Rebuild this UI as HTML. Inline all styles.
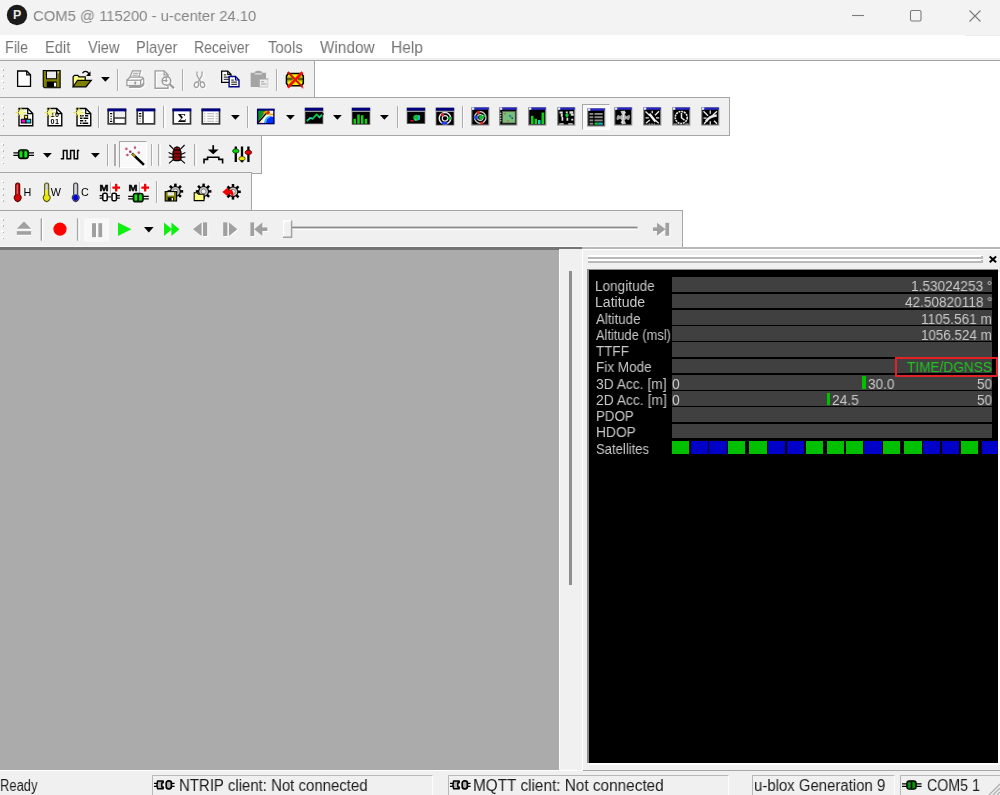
<!DOCTYPE html>
<html><head><meta charset="utf-8"><title>u-center</title>
<style>
html,body{margin:0;padding:0;}
body{width:1000px;height:795px;overflow:hidden;position:relative;background:#fff;font-family:"Liberation Sans",sans-serif;}
.r{position:absolute;display:block;}
.t{position:absolute;white-space:pre;transform-origin:0 50%;display:block;will-change:transform;}
svg{overflow:visible;}
.ic{filter:blur(0.35px);}
</style></head><body>
<div class="r" style="left:0px;top:0px;width:1000px;height:34.6px;background:#f3f3f3;"></div>
<svg class="r" style="left:6px;top:4px" width="22" height="22" viewBox="0 0 22 22"><circle cx="11" cy="11" r="10.2" fill="#1b1b1b"/><text x="11.2" y="15.4" text-anchor="middle" font-family="Liberation Sans, sans-serif" font-weight="bold" font-size="12.4" fill="#e8e8e8">P</text></svg>
<span class="t" style="left:33.26px;top:8.38px;font-size:15.5px;line-height:15.5px;color:#858585;transform:scaleX(0.9564);">COM5 @ 115200 - u-center 24.10</span>
<svg class="r" style="left:840px;top:0" width="160" height="35" viewBox="0 0 160 35" fill="none" stroke="#7c7c7c" stroke-width="1.1"><path d="M12 15.5H24"/><rect x="70.5" y="10.5" width="10.5" height="10.5" rx="1.5"/><path d="M129.5 10.5L140.5 21.5M140.5 10.5L129.5 21.5"/></svg>
<div class="r" style="left:0px;top:34.6px;width:1000px;height:25px;background:#ffffff;"></div>
<div class="r" style="left:965px;top:34.6px;width:35px;height:1.2px;background:#ececec;"></div>
<span class="t" style="left:5.45px;top:38.79px;font-size:16.2px;line-height:16.2px;color:#747474;transform:scaleX(0.8866);">File</span>
<span class="t" style="left:44.83px;top:38.79px;font-size:16.2px;line-height:16.2px;color:#747474;transform:scaleX(0.9061);">Edit</span>
<span class="t" style="left:87.93px;top:38.79px;font-size:16.2px;line-height:16.2px;color:#747474;transform:scaleX(0.9065);">View</span>
<span class="t" style="left:135.83px;top:38.79px;font-size:16.2px;line-height:16.2px;color:#747474;transform:scaleX(0.9011);">Player</span>
<span class="t" style="left:193.88px;top:38.79px;font-size:16.2px;line-height:16.2px;color:#747474;transform:scaleX(0.8647);">Receiver</span>
<span class="t" style="left:267.70px;top:38.79px;font-size:16.2px;line-height:16.2px;color:#747474;transform:scaleX(0.9205);">Tools</span>
<span class="t" style="left:319.92px;top:38.79px;font-size:16.2px;line-height:16.2px;color:#747474;transform:scaleX(0.9463);">Window</span>
<span class="t" style="left:390.76px;top:38.79px;font-size:16.2px;line-height:16.2px;color:#747474;transform:scaleX(0.9570);">Help</span>
<div class="r" style="left:0px;top:57.5px;width:1000px;height:2.4px;background:#f0f0f0;"></div>
<div class="r" style="left:0px;top:59.8px;width:1000px;height:190px;background:#ffffff;"></div>
<div class="r" style="left:0px;top:59.7px;width:1000px;height:1.4px;background:#a4a4a4;"></div>
<div class="r" style="left:0px;top:59.8px;width:314.6px;height:38.9px;background:#f0f0f0;border-top:1.4px solid #a6a6a6;border-right:1.4px solid #a6a6a6;border-bottom:1.4px solid #a6a6a6;box-sizing:border-box;"></div>
<div class="r" style="left:1.2px;top:67.89999999999999px;width:1.7px;height:1.7px;background:#ffffff;"></div>
<div class="r" style="left:2.6px;top:69.1px;width:1.8px;height:1.8px;background:#b6b6b6;"></div>
<div class="r" style="left:1.2px;top:74.1px;width:1.7px;height:1.7px;background:#ffffff;"></div>
<div class="r" style="left:2.6px;top:75.3px;width:1.8px;height:1.8px;background:#b6b6b6;"></div>
<div class="r" style="left:1.2px;top:80.3px;width:1.7px;height:1.7px;background:#ffffff;"></div>
<div class="r" style="left:2.6px;top:81.5px;width:1.8px;height:1.8px;background:#b6b6b6;"></div>
<div class="r" style="left:1.2px;top:86.5px;width:1.7px;height:1.7px;background:#ffffff;"></div>
<div class="r" style="left:2.6px;top:87.69999999999999px;width:1.8px;height:1.8px;background:#b6b6b6;"></div>
<div class="r" style="left:0px;top:97.3px;width:730.4px;height:38.9px;background:#f0f0f0;border-top:1.4px solid #a6a6a6;border-right:1.4px solid #a6a6a6;border-bottom:1.4px solid #a6a6a6;box-sizing:border-box;"></div>
<div class="r" style="left:1.2px;top:105.39999999999999px;width:1.7px;height:1.7px;background:#ffffff;"></div>
<div class="r" style="left:2.6px;top:106.6px;width:1.8px;height:1.8px;background:#b6b6b6;"></div>
<div class="r" style="left:1.2px;top:111.6px;width:1.7px;height:1.7px;background:#ffffff;"></div>
<div class="r" style="left:2.6px;top:112.8px;width:1.8px;height:1.8px;background:#b6b6b6;"></div>
<div class="r" style="left:1.2px;top:117.8px;width:1.7px;height:1.7px;background:#ffffff;"></div>
<div class="r" style="left:2.6px;top:119.0px;width:1.8px;height:1.8px;background:#b6b6b6;"></div>
<div class="r" style="left:1.2px;top:124.0px;width:1.7px;height:1.7px;background:#ffffff;"></div>
<div class="r" style="left:2.6px;top:125.19999999999999px;width:1.8px;height:1.8px;background:#b6b6b6;"></div>
<div class="r" style="left:0px;top:134.8px;width:262.3px;height:38.9px;background:#f0f0f0;border-top:1.4px solid #a6a6a6;border-right:1.4px solid #a6a6a6;border-bottom:1.4px solid #a6a6a6;box-sizing:border-box;"></div>
<div class="r" style="left:1.2px;top:142.9px;width:1.7px;height:1.7px;background:#ffffff;"></div>
<div class="r" style="left:2.6px;top:144.10000000000002px;width:1.8px;height:1.8px;background:#b6b6b6;"></div>
<div class="r" style="left:1.2px;top:149.1px;width:1.7px;height:1.7px;background:#ffffff;"></div>
<div class="r" style="left:2.6px;top:150.3px;width:1.8px;height:1.8px;background:#b6b6b6;"></div>
<div class="r" style="left:1.2px;top:155.3px;width:1.7px;height:1.7px;background:#ffffff;"></div>
<div class="r" style="left:2.6px;top:156.50000000000003px;width:1.8px;height:1.8px;background:#b6b6b6;"></div>
<div class="r" style="left:1.2px;top:161.5px;width:1.7px;height:1.7px;background:#ffffff;"></div>
<div class="r" style="left:2.6px;top:162.70000000000002px;width:1.8px;height:1.8px;background:#b6b6b6;"></div>
<div class="r" style="left:0px;top:172.3px;width:252.3px;height:38.9px;background:#f0f0f0;border-top:1.4px solid #a6a6a6;border-right:1.4px solid #a6a6a6;border-bottom:1.4px solid #a6a6a6;box-sizing:border-box;"></div>
<div class="r" style="left:1.2px;top:180.4px;width:1.7px;height:1.7px;background:#ffffff;"></div>
<div class="r" style="left:2.6px;top:181.60000000000002px;width:1.8px;height:1.8px;background:#b6b6b6;"></div>
<div class="r" style="left:1.2px;top:186.6px;width:1.7px;height:1.7px;background:#ffffff;"></div>
<div class="r" style="left:2.6px;top:187.8px;width:1.8px;height:1.8px;background:#b6b6b6;"></div>
<div class="r" style="left:1.2px;top:192.8px;width:1.7px;height:1.7px;background:#ffffff;"></div>
<div class="r" style="left:2.6px;top:194.00000000000003px;width:1.8px;height:1.8px;background:#b6b6b6;"></div>
<div class="r" style="left:1.2px;top:199.0px;width:1.7px;height:1.7px;background:#ffffff;"></div>
<div class="r" style="left:2.6px;top:200.20000000000002px;width:1.8px;height:1.8px;background:#b6b6b6;"></div>
<div class="r" style="left:0px;top:209.8px;width:682.8px;height:38.9px;background:#f0f0f0;border-top:1.4px solid #a6a6a6;border-right:1.4px solid #a6a6a6;border-bottom:1.4px solid #a6a6a6;box-sizing:border-box;"></div>
<div class="r" style="left:1.2px;top:217.9px;width:1.7px;height:1.7px;background:#ffffff;"></div>
<div class="r" style="left:2.6px;top:219.10000000000002px;width:1.8px;height:1.8px;background:#b6b6b6;"></div>
<div class="r" style="left:1.2px;top:224.1px;width:1.7px;height:1.7px;background:#ffffff;"></div>
<div class="r" style="left:2.6px;top:225.3px;width:1.8px;height:1.8px;background:#b6b6b6;"></div>
<div class="r" style="left:1.2px;top:230.3px;width:1.7px;height:1.7px;background:#ffffff;"></div>
<div class="r" style="left:2.6px;top:231.50000000000003px;width:1.8px;height:1.8px;background:#b6b6b6;"></div>
<div class="r" style="left:1.2px;top:236.5px;width:1.7px;height:1.7px;background:#ffffff;"></div>
<div class="r" style="left:2.6px;top:237.70000000000002px;width:1.8px;height:1.8px;background:#b6b6b6;"></div>
<svg class="r ic" style="left:14px;top:68.5px" width="20" height="20" viewBox="0 0 16 16"><path d="M2.9 1.6H10.2L13.2 4.6V13.9H2.9Z" fill="#fff" stroke="#000" stroke-width="1.05"/><path d="M10.2 1.6V4.6H13.2" fill="none" stroke="#000" stroke-width="1"/></svg>
<svg class="r ic" style="left:42.1px;top:68.5px" width="20" height="20" viewBox="0 0 16 16"><path d="M1 1.2H14.5V15H2L1 14Z" fill="#808000" stroke="#000" stroke-width=".9"/><rect x="3.6" y="1.6" width="8" height="6.2" fill="#ececec" stroke="#000" stroke-width=".8"/><rect x="3.8" y="10" width="8" height="4.6" fill="#000"/><rect x="9.6" y="11" width="1.7" height="3" fill="#fff"/><rect x="12.6" y="2.2" width="1" height="1.2" fill="#d8d8a0"/></svg>
<svg class="r ic" style="left:71.5px;top:68.5px" width="20" height="20" viewBox="0 0 16 16"><path d="M.9 14.2V6.2L2 5H4.6L5.6 6.2H10.6V9" fill="#ffff80" stroke="#000" stroke-width="1"/><path d="M.9 14.2L4.4 9H15.4L11.2 14.2Z" fill="#808000" stroke="#000" stroke-width="1"/><path d="M8.4 3.4C9.6 1.2 12.4 1.4 13.6 4" fill="none" stroke="#000" stroke-width="1"/><path d="M14.8 1.8V5.6H11.2Z" fill="#000"/></svg>
<svg class="r" style="left:100.5px;top:77.3px" width="8.8" height="4.8" viewBox="0 0 8.8 4.8"><path d="M0 0H8.8L4.4 4.8Z" fill="#000"/></svg>
<div class="r" style="left:116.8px;top:69px;width:1.4px;height:21.5px;background:#acacac;"></div>
<div class="r" style="left:118.2px;top:69px;width:1.2px;height:21.5px;background:#fbfbfb;"></div>
<svg class="r ic" style="left:126px;top:68.5px" width="20" height="20" viewBox="0 0 16 16"><g transform="translate(-.8 0)"><g transform="translate(.9 .9)"><path d="M4 6.5L6 1.5H12.5L11 6.5" fill="none" stroke="#fff" stroke-width="1"/><path d="M6.5 3.4H10.8M6 5H10.2" stroke="#fff" stroke-width=".9"/><path d="M1.5 9L4 6.5H13.5L15 8V12.5L13.5 14H3.5" fill="none" stroke="#fff" stroke-width="1"/><rect x="1.5" y="9" width="11" height="4.3" fill="none" stroke="#fff" stroke-width="1"/><path d="M12.5 9L15 7.2M12.5 13.3L15 11.4" stroke="#fff" stroke-width=".9"/><rect x="7.5" y="10" width="1.5" height="2.4" fill="#fff"/><path d="M3 14.6H12.5" stroke="#fff" stroke-width="1"/></g><path d="M4 6.5L6 1.5H12.5L11 6.5" fill="none" stroke="#9c9c9c" stroke-width="1"/><path d="M6.5 3.4H10.8M6 5H10.2" stroke="#9c9c9c" stroke-width=".9"/><path d="M1.5 9L4 6.5H13.5L15 8V12.5L13.5 14H3.5" fill="none" stroke="#9c9c9c" stroke-width="1"/><rect x="1.5" y="9" width="11" height="4.3" fill="none" stroke="#9c9c9c" stroke-width="1"/><path d="M12.5 9L15 7.2M12.5 13.3L15 11.4" stroke="#9c9c9c" stroke-width=".9"/><rect x="7.5" y="10" width="1.5" height="2.4" fill="#9c9c9c"/><path d="M3 14.6H12.5" stroke="#9c9c9c" stroke-width="1"/></g></svg>
<svg class="r ic" style="left:154.5px;top:68.5px" width="20" height="20" viewBox="0 0 16 16"><g transform="translate(-1.2 0)"><g transform="translate(.9 .9)"><path d="M11.6 13.4V15.4H1.3V1.5H8.5L11.6 4.6V6.4" fill="none" stroke="#fff" stroke-width="1.1"/><path d="M8.5 1.5V4.6H11.6" fill="none" stroke="#fff" stroke-width="1"/><circle cx="10.4" cy="9.6" r="3.4" fill="none" stroke="#fff" stroke-width="1.2"/><path d="M12.8 12L16.4 15.4" stroke="#fff" stroke-width="1.9"/><path d="M7.4 9.2H11.2M10.2 6.6V10.4" stroke="#fff" stroke-width="1"/></g><path d="M11.6 13.4V15.4H1.3V1.5H8.5L11.6 4.6V6.4" fill="none" stroke="#9c9c9c" stroke-width="1.1"/><path d="M8.5 1.5V4.6H11.6" fill="none" stroke="#9c9c9c" stroke-width="1"/><circle cx="10.4" cy="9.6" r="3.4" fill="none" stroke="#9c9c9c" stroke-width="1.2"/><path d="M12.8 12L16.4 15.4" stroke="#9c9c9c" stroke-width="1.9"/><path d="M7.4 9.2H11.2M10.2 6.6V10.4" stroke="#9c9c9c" stroke-width="1"/></g></svg>
<div class="r" style="left:181.8px;top:69px;width:1.4px;height:21.5px;background:#acacac;"></div>
<div class="r" style="left:183.2px;top:69px;width:1.2px;height:21.5px;background:#fbfbfb;"></div>
<svg class="r ic" style="left:189px;top:68.5px" width="20" height="20" viewBox="0 0 16 16"><g transform="translate(.9 .9)"><path d="M6.4 2V5L9.6 10.8M10.4 2V5L7.2 10.8" fill="none" stroke="#fff" stroke-width="1"/><ellipse cx="6" cy="12.6" rx="1.7" ry="2.2" fill="none" stroke="#fff" stroke-width="1" transform="rotate(20 6 12.6)"/><ellipse cx="10.8" cy="12.6" rx="1.7" ry="2.2" fill="none" stroke="#fff" stroke-width="1" transform="rotate(-20 10.8 12.6)"/></g><path d="M6.4 2V5L9.6 10.8M10.4 2V5L7.2 10.8" fill="none" stroke="#a0a0a0" stroke-width="1"/><ellipse cx="6" cy="12.6" rx="1.7" ry="2.2" fill="none" stroke="#a0a0a0" stroke-width="1" transform="rotate(20 6 12.6)"/><ellipse cx="10.8" cy="12.6" rx="1.7" ry="2.2" fill="none" stroke="#a0a0a0" stroke-width="1" transform="rotate(-20 10.8 12.6)"/></svg>
<svg class="r ic" style="left:220px;top:68.5px" width="20" height="20" viewBox="0 0 16 16"><path d="M1.3 1.7H6.2L8.8 4.3V10.6H1.3Z" fill="#fff" stroke="#000" stroke-width="1"/><path d="M6.2 1.7V4.3H8.8" fill="none" stroke="#000" stroke-width=".9"/><path d="M3 4.6H5M3 6.4H7.4M3 8.2H7.4" stroke="#404040" stroke-width="1"/><path d="M7.3 6H12.4L15.2 8.8V14.2H7.3Z" fill="#fff" stroke="#000080" stroke-width="1.1"/><path d="M12.4 6V8.8H15.2" fill="none" stroke="#000080" stroke-width=".9"/><path d="M9 8.8H11M9 10.5H13.6M9 12.2H13.6" stroke="#404040" stroke-width="1"/></svg>
<svg class="r ic" style="left:248.5px;top:68.5px" width="20" height="20" viewBox="0 0 16 16"><path d="M1.3 3H4.6V2.2Q7.5 .6 10.4 2.2V3H13.6V14.3H1.3Z" fill="#a4a4a4"/><rect x="4.8" y="3.4" width="5.4" height="1" fill="#e4e4e4"/><rect x="8.2" y="8" width="7.2" height="6.6" fill="#ededed" stroke="#a4a4a4" stroke-width=".8"/><path d="M9.6 10.2H12M9.6 12H14" stroke="#a4a4a4" stroke-width=".9"/><path d="M15.9 8V15.2H8" fill="none" stroke="#fff" stroke-width=".8"/></svg>
<div class="r" style="left:275.8px;top:69px;width:1.4px;height:21.5px;background:#acacac;"></div>
<div class="r" style="left:277.2px;top:69px;width:1.2px;height:21.5px;background:#fbfbfb;"></div>
<svg class="r ic" style="left:283.5px;top:68.5px" width="20" height="20" viewBox="0 0 16 16"><path d="M3.4 3.6H13.8L15.4 5.6V11.6L13.8 13.4H3.4L2 11.6V5.6Z" fill="#f4f400" stroke="#000" stroke-width="1.3"/><path d="M2.2 7.9H7M11 7.9H15.2" stroke="#303000" stroke-width="1.2"/><path d="M2.4 6.6H6.4M11 6.6H15M2.4 9.4H6.4M11.4 9.4H15" stroke="#909000" stroke-width=".9"/><path d="M3 2.4L14.8 14.4" stroke="#d01000" stroke-width="1.5"/><path d="M14.8 2.6L3 14.8" stroke="#f01010" stroke-width="2.2"/><rect x="14.6" y="14.6" width=".9" height=".9" fill="#e00000"/></svg>
<svg class="r ic" style="left:13.5px;top:106.5px" width="20" height="20" viewBox="0 0 16 16"><path d="M4 1.2H11L15 5.2V15H4Z" fill="#fff" stroke="#000" stroke-width="1.1"/><path d="M11 1.2V5.2H15" fill="none" stroke="#000" stroke-width="1"/><rect x="8.3" y="6.6" width="2.6" height="2.8" fill="#ffe000" stroke="#000" stroke-width=".8"/><rect x="5.8" y="9.8" width="3.8" height="3" fill="#ff00c8" stroke="#000" stroke-width=".8"/><rect x="9.6" y="9.8" width="3.8" height="3" fill="#00d8d8" stroke="#000" stroke-width=".8"/><g transform="translate(1.6 .5)"><g stroke="#e0e048" stroke-width=".8"><path d="M-.4 4H8.4M4 -.2V8.2M1 1L7 7M7 1L1 7"/></g><circle cx="4" cy="4" r="1.9" fill="#f6f690"/></g></svg>
<svg class="r ic" style="left:42.5px;top:106.5px" width="20" height="20" viewBox="0 0 16 16"><path d="M4 1.2H11L15 5.2V15H4Z" fill="#fff" stroke="#000" stroke-width="1.1"/><path d="M11 1.2V5.2H15" fill="none" stroke="#000" stroke-width="1"/><text x="9.7" y="8.2" font-family="Liberation Sans, sans-serif" font-weight="bold" font-size="5.8" text-anchor="middle" fill="#000" letter-spacing=".5">10</text><text x="9.7" y="13.7" font-family="Liberation Sans, sans-serif" font-weight="bold" font-size="5.8" text-anchor="middle" fill="#000" letter-spacing=".5">01</text><g transform="translate(1.6 .5)"><g stroke="#e0e048" stroke-width=".8"><path d="M-.4 4H8.4M4 -.2V8.2M1 1L7 7M7 1L1 7"/></g><circle cx="4" cy="4" r="1.9" fill="#f6f690"/></g></svg>
<svg class="r ic" style="left:71.5px;top:106.5px" width="20" height="20" viewBox="0 0 16 16"><path d="M4 1.2H11L15 5.2V15H4Z" fill="#fff" stroke="#000" stroke-width="1.1"/><path d="M11 1.2V5.2H15" fill="none" stroke="#000" stroke-width="1"/><path d="M6.4 7H9.4M10.4 7H13M6.4 9H8.4M9.2 9H13M6.4 11H9M10.2 11H11.4M6.4 13H7.6M8.4 13H13" stroke="#000" stroke-width="1.1"/><g transform="translate(1.6 .5)"><g stroke="#e0e048" stroke-width=".8"><path d="M-.4 4H8.4M4 -.2V8.2M1 1L7 7M7 1L1 7"/></g><circle cx="4" cy="4" r="1.9" fill="#f6f690"/></g></svg>
<div class="r" style="left:97.8px;top:106px;width:1.4px;height:22px;background:#acacac;"></div>
<div class="r" style="left:99.2px;top:106px;width:1.2px;height:22px;background:#fbfbfb;"></div>
<svg class="r ic" style="left:107px;top:106.5px" width="20" height="20" viewBox="0 0 16 16"><rect x="1" y="2" width="13.8" height="11.5" fill="#fff" stroke="#363636" stroke-width="1.35"/><rect x=".4" y="1.2" width="15" height="2.3" fill="#000080"/><path d="M5.6 3.4V13.6M5.6 8.8H15" stroke="#363636" stroke-width="1.35"/><rect x="6.2" y="4" width="8.2" height="4" fill="#f0f0f0"/><path d="M2.4 5.3H4.2M2.8 7.4H3.8M2.8 9.4H3.8M2.4 11.4H4.2" stroke="#000" stroke-width="1"/></svg>
<svg class="r ic" style="left:136px;top:106.5px" width="20" height="20" viewBox="0 0 16 16"><rect x="1" y="2" width="13.8" height="11.5" fill="#fff" stroke="#363636" stroke-width="1.35"/><rect x=".4" y="1.2" width="15" height="2.3" fill="#000080"/><path d="M5.6 3.4V13.6" stroke="#363636" stroke-width="1.35"/><path d="M2.4 5.2H4.2M2.2 7.2H4.4" stroke="#000" stroke-width="1"/><path d="M2.6 9.3H4M2.6 11.3H4" stroke="#808080" stroke-width=".8"/></svg>
<div class="r" style="left:163.0px;top:106px;width:1.4px;height:22px;background:#acacac;"></div>
<div class="r" style="left:164.39999999999998px;top:106px;width:1.2px;height:22px;background:#fbfbfb;"></div>
<svg class="r ic" style="left:172px;top:106.5px" width="20" height="20" viewBox="0 0 16 16"><rect x="1" y="2" width="13.8" height="11.5" fill="#fff" stroke="#363636" stroke-width="1.35"/><rect x=".4" y="1.2" width="15" height="2.3" fill="#000080"/><text x="7.9" y="12.2" font-family="Liberation Serif, serif" font-weight="bold" font-size="10.4" text-anchor="middle" fill="#000">Σ</text></svg>
<svg class="r ic" style="left:201px;top:106.5px" width="20" height="20" viewBox="0 0 16 16"><rect x="1" y="2" width="13.8" height="11.5" fill="#fff" stroke="#363636" stroke-width="1.35"/><rect x=".4" y="1.2" width="15" height="2.3" fill="#000080"/><g stroke="#b0b0b0" stroke-width=".9"><path d="M2.4 5.4H3.6M5 5.4H10.4M11.6 5.4H13.6M2.4 7.4H3.6M5 7.4H10.4M11.6 7.4H13.6M2.4 9.4H3.6M5 9.4H10.4M11.6 9.4H13.6M2.4 11.4H3.6M5 11.4H10.4M11.6 11.4H13.6"/></g></svg>
<svg class="r" style="left:230.5px;top:114.8px" width="8.8" height="4.8" viewBox="0 0 8.8 4.8"><path d="M0 0H8.8L4.4 4.8Z" fill="#000"/></svg>
<div class="r" style="left:246.60000000000002px;top:106px;width:1.4px;height:22px;background:#acacac;"></div>
<div class="r" style="left:248.0px;top:106px;width:1.2px;height:22px;background:#fbfbfb;"></div>
<svg class="r ic" style="left:256px;top:106.5px" width="20" height="20" viewBox="0 0 16 16"><defs><clipPath id="mpc"><rect x="1" y="2" width="13.6" height="11.4"/></clipPath></defs><rect x="1" y="2" width="13.6" height="11.4" fill="#fff8d8"/><g clip-path="url(#mpc)"><path d="M1 2H9L1 13Z" fill="#109020"/><path d="M8 13.4C8 9 10 7.5 12 7.6S15 9 15 9V13.4Z" fill="#0030ff"/><path d="M7 13.4C7.5 10 9 8 11 7.8" fill="none" stroke="#40b0ff" stroke-width="1.6"/><path d="M1 13.4L10 3" stroke="#000" stroke-width="1.1"/><circle cx="9.4" cy="4.4" r="1.7" fill="#d83000"/><path d="M6 5L9 3.2M10.6 6H14.6" stroke="#f0a000" stroke-width="1.2"/><path d="M1 13.4H5" stroke="#e0a000" stroke-width="1.6"/></g><rect x="1.3" y="2" width="13" height="11.3" fill="none" stroke="#000060" stroke-width="1.1"/><rect x=".8" y="1.4" width="14" height="1.5" fill="#000080"/></svg>
<svg class="r" style="left:285.6px;top:114.8px" width="8.8" height="4.8" viewBox="0 0 8.8 4.8"><path d="M0 0H8.8L4.4 4.8Z" fill="#000"/></svg>
<svg class="r ic" style="left:303.5px;top:106.5px" width="20" height="20" viewBox="0 0 16 16"><rect x=".9" y=".8" width="14.2" height="12.6" fill="#000"/><rect x=".9" y=".8" width="14.2" height="12.6" fill="none" stroke="#505050" stroke-width=".6"/><rect x=".7" y=".7" width="14.6" height="2.3" fill="#000080"/><rect x=".7" y="3" width="14.6" height="1" fill="#9a9a9a"/><path d="M2.2 11.2L5 8.8L7 9.4L10 6L12.4 8.2L14.6 6" fill="none" stroke="#00d040" stroke-width="1.4"/><path d="M3.4 10.2L5 8.8L7 9.4M11.6 7.6L12.4 8.2L13.6 7" fill="none" stroke="#30c0c0" stroke-width="1.1"/><path d="M14.6 5.6H15.8" stroke="#000" stroke-width="1.1"/></svg>
<svg class="r" style="left:333px;top:114.8px" width="8.8" height="4.8" viewBox="0 0 8.8 4.8"><path d="M0 0H8.8L4.4 4.8Z" fill="#000"/></svg>
<svg class="r ic" style="left:351px;top:106.5px" width="20" height="20" viewBox="0 0 16 16"><rect x=".9" y=".8" width="14.2" height="13" fill="#000"/><rect x=".9" y=".8" width="14.2" height="13" fill="none" stroke="#505050" stroke-width=".6"/><rect x=".7" y=".7" width="14.6" height="2.3" fill="#000080"/><rect x=".7" y="3" width="14.6" height="1" fill="#9a9a9a"/><g fill="#10d010"><rect x="2" y="9.4" width="2" height="4"/><rect x="5" y="6" width="2" height="7.4"/><rect x="8" y="6.6" width="2" height="6.8"/><rect x="11" y="9.4" width="2" height="4"/></g></svg>
<svg class="r" style="left:380.3px;top:114.8px" width="8.8" height="4.8" viewBox="0 0 8.8 4.8"><path d="M0 0H8.8L4.4 4.8Z" fill="#000"/></svg>
<div class="r" style="left:396.5px;top:106px;width:1.4px;height:22px;background:#acacac;"></div>
<div class="r" style="left:397.9px;top:106px;width:1.2px;height:22px;background:#fbfbfb;"></div>
<svg class="r ic" style="left:405.5px;top:106.5px" width="20" height="20" viewBox="0 0 16 16"><rect x=".9" y=".8" width="14.2" height="12.4" fill="#000"/><rect x=".9" y=".8" width="14.2" height="12.4" fill="none" stroke="#505050" stroke-width=".6"/><rect x=".7" y=".7" width="14.6" height="2.3" fill="#000080"/><rect x=".7" y="3" width="14.6" height="1" fill="#9a9a9a"/><ellipse cx="8.4" cy="8.6" rx="2.6" ry="2.4" fill="#10c030"/><rect x="9.6" y="6.6" width="1.6" height="3.6" fill="#20b8d0"/><rect x="7" y="9.6" width="1.4" height="1.4" fill="#40d0c0"/><rect x="3.6" y="10.4" width="2.6" height="1.2" fill="#d01010"/></svg>
<svg class="r ic" style="left:434.5px;top:106.5px" width="20" height="20" viewBox="0 0 16 16"><rect x=".9" y=".8" width="14.2" height="13.6" fill="#000"/><rect x=".9" y=".8" width="14.2" height="13.6" fill="none" stroke="#505050" stroke-width=".6"/><rect x=".7" y=".7" width="14.6" height="2.3" fill="#000080"/><rect x=".7" y="3" width="14.6" height="1" fill="#9a9a9a"/><circle cx="8" cy="9" r="4.6" fill="none" stroke="#e8e8e8" stroke-width="1.2"/><circle cx="8" cy="9" r="2.2" fill="none" stroke="#e0e0e0" stroke-width="1"/><circle cx="6" cy="6.2" r="1.3" fill="#e02020"/><circle cx="11.6" cy="9" r="1.4" fill="#10b030"/><ellipse cx="7.6" cy="12.8" rx="2.4" ry="1.3" fill="#2040e0"/></svg>
<div class="r" style="left:461.6px;top:106px;width:1.4px;height:22px;background:#acacac;"></div>
<div class="r" style="left:463.0px;top:106px;width:1.2px;height:22px;background:#fbfbfb;"></div>
<svg class="r ic" style="left:470.5px;top:106.5px" width="20" height="20" viewBox="0 0 16 16"><rect x=".6" y=".6" width="13.6" height="13.8" fill="#000" stroke="#8a8a8a" stroke-width=".9"/><rect x=".6" y=".4" width="13.6" height="1.8" fill="#2828c8"/><rect x=".6" y=".4" width="2" height="1.8" fill="#f4f4f4"/><circle cx="7.4" cy="8.4" r="4.6" fill="none" stroke="#d0d0d0" stroke-width="1"/><circle cx="7.4" cy="8.4" r="2.3" fill="none" stroke="#d0d0d0" stroke-width=".9"/><circle cx="6" cy="4.2" r="1.3" fill="#e02020"/><circle cx="8.6" cy="12.8" r="1.3" fill="#e02020"/><circle cx="4" cy="8.4" r="1.6" fill="#2040e0"/><path d="M6 8.4L8 6.2L10.4 8.4L8 10.6Z" fill="#10c030"/><circle cx="10.6" cy="7" r="1" fill="#10c030"/></svg>
<svg class="r ic" style="left:499px;top:106.5px" width="20" height="20" viewBox="0 0 16 16"><rect x=".6" y=".6" width="13.6" height="13.8" fill="#000" stroke="#8a8a8a" stroke-width=".9"/><rect x=".6" y=".4" width="13.6" height="1.8" fill="#2828c8"/><rect x=".6" y=".4" width="2" height="1.8" fill="#f4f4f4"/><rect x="2.8" y="3.4" width="10.2" height="9.4" fill="#78c078" stroke="#505050" stroke-width=".6"/><path d="M.8 5H2M.8 7H2M.8 9H2M.8 11H2" stroke="#e0e0e0" stroke-width=".9"/><rect x="4" y="4.8" width="1.4" height="1" fill="#c06040"/><rect x="8" y="6.4" width="1.3" height="1.3" fill="#2060c0"/><rect x="10" y="8.4" width="1.2" height="1.2" fill="#104080"/><rect x="9" y="7.4" width="1" height="1" fill="#2080a0"/><rect x="6.6" y="10.6" width="1.4" height="1" fill="#c06040"/></svg>
<svg class="r ic" style="left:527.5px;top:106.5px" width="20" height="20" viewBox="0 0 16 16"><rect x=".6" y=".6" width="13.6" height="13.8" fill="#000" stroke="#8a8a8a" stroke-width=".9"/><rect x=".6" y=".4" width="13.6" height="1.8" fill="#2828c8"/><rect x=".6" y=".4" width="2" height="1.8" fill="#f4f4f4"/><rect x="2.4" y="7" width="2" height="6.6" fill="#10d010"/><rect x="5.2" y="9.4" width="2" height="4.2" fill="#10d010"/><rect x="8" y="10.4" width="2" height="3.2" fill="#10d0d0"/><rect x="10.8" y="4.4" width="2.2" height="9.2" fill="#10d010"/></svg>
<svg class="r ic" style="left:556.5px;top:106.5px" width="20" height="20" viewBox="0 0 16 16"><rect x=".6" y=".6" width="13.6" height="13.8" fill="#000" stroke="#8a8a8a" stroke-width=".9"/><rect x=".6" y=".4" width="13.6" height="1.8" fill="#2828c8"/><rect x=".6" y=".4" width="2" height="1.8" fill="#f4f4f4"/><g fill="#e0e0e0"><rect x="2" y="3.6" width="2.6" height="1.6"/><rect x="3" y="5.2" width="1.6" height="2.6"/><rect x="3.6" y="8" width="1.4" height="3"/><rect x="7" y="3.6" width="1.6" height="1.4"/><rect x="10" y="3.4" width="3" height="2"/><rect x="11" y="5.4" width="2.4" height="1.6"/><rect x="7.6" y="8.6" width="1.4" height="2.4"/><rect x="11.4" y="9.4" width="1.6" height="1.4"/><rect x="1.8" y="13" width="3.6" height="1"/><rect x="9" y="13" width="3.6" height="1"/></g><path d="M8 4.6L9.6 6.6L8 8.6L6.4 6.6Z" fill="#10d030"/></svg>
<div class="r" style="left:581.5px;top:103.5px;width:28.3px;height:26.8px;background:#f9f9f9;box-sizing:border-box;border-top:1.3px solid #a6a6a6;border-left:1.3px solid #a6a6a6;border-right:1.3px solid #fff;border-bottom:1.3px solid #fff;"></div>
<svg class="r ic" style="left:586.8px;top:108.3px" width="20" height="20" viewBox="0 0 16 16"><rect x=".6" y=".6" width="13.6" height="13.8" fill="#000" stroke="#8a8a8a" stroke-width=".9"/><rect x=".6" y=".4" width="13.6" height="1.8" fill="#2828c8"/><rect x=".6" y=".4" width="2" height="1.8" fill="#f4f4f4"/><g fill="#8c8c8c"><rect x="2" y="4" width="3" height="1.5"/><rect x="6" y="4" width="6.6" height="1.5"/><rect x="2" y="6.6" width="3" height="1.5"/><rect x="6" y="6.6" width="6.6" height="1.5"/><rect x="2" y="9.2" width="3" height="1.5"/><rect x="6" y="9.2" width="6.6" height="1.5"/><rect x="2" y="11.8" width="3" height="1.5"/></g><rect x="6" y="11.6" width="3.4" height="1.8" fill="#10c040"/><rect x="9.4" y="11.6" width="3.2" height="1.8" fill="#10b0c0"/></svg>
<svg class="r ic" style="left:614px;top:106.5px" width="20" height="20" viewBox="0 0 16 16"><rect x=".6" y=".6" width="13.6" height="13.8" fill="#000" stroke="#8a8a8a" stroke-width=".9"/><rect x=".6" y=".4" width="13.6" height="1.8" fill="#2828c8"/><rect x=".6" y=".4" width="2" height="1.8" fill="#f4f4f4"/><path d="M7.4 8.4L5.2 3.4Q7.6 2.4 9.6 4.2Z" fill="#c8c8c8" transform="rotate(0 7.4 8.4)"/><path d="M7.4 8.4L5.2 3.4Q7.6 2.4 9.6 4.2Z" fill="#a0a0a0" transform="rotate(90 7.4 8.4)"/><path d="M7.4 8.4L5.2 3.4Q7.6 2.4 9.6 4.2Z" fill="#c8c8c8" transform="rotate(180 7.4 8.4)"/><path d="M7.4 8.4L5.2 3.4Q7.6 2.4 9.6 4.2Z" fill="#a0a0a0" transform="rotate(270 7.4 8.4)"/><circle cx="7.4" cy="8.4" r="2.4" fill="#b4b4b4"/><path d="M8.2 3L6.6 13.8" stroke="#e8e8e8" stroke-width=".8"/></svg>
<svg class="r ic" style="left:643px;top:106.5px" width="20" height="20" viewBox="0 0 16 16"><rect x=".6" y=".6" width="13.6" height="13.8" fill="#000" stroke="#8a8a8a" stroke-width=".9"/><rect x=".6" y=".4" width="13.6" height="1.8" fill="#2828c8"/><rect x=".6" y=".4" width="2" height="1.8" fill="#f4f4f4"/><g stroke="#f0f0f0" stroke-width="1"><path d="M2 3.6L5.6 7M12.8 3.4L9.6 6.6M2 8.6H4.6M10.4 8.6H13M2.4 13L5.4 10.4M12.6 13L10 10.8M7.4 3V5"/></g><path d="M5 5.4L10 11.6" stroke="#f0f0f0" stroke-width="2"/><path d="M4.6 13.6H9.6" stroke="#c0c0c0" stroke-width=".9" stroke-dasharray="1.2 .8"/></svg>
<svg class="r ic" style="left:671.5px;top:106.5px" width="20" height="20" viewBox="0 0 16 16"><rect x=".6" y=".6" width="13.6" height="13.8" fill="#000" stroke="#8a8a8a" stroke-width=".9"/><rect x=".6" y=".4" width="13.6" height="1.8" fill="#2828c8"/><rect x=".6" y=".4" width="2" height="1.8" fill="#f4f4f4"/><circle cx="7.4" cy="8.4" r="4.8" fill="none" stroke="#e8e8e8" stroke-width="1.3" stroke-dasharray="1.6 .6"/><path d="M7.6 4.8V8.6L10 10.6" fill="none" stroke="#f0f0f0" stroke-width="1.2"/><path d="M1.4 13.6H4M10.6 13.6H13.4" stroke="#c0c0c0" stroke-width=".9"/></svg>
<svg class="r ic" style="left:700.5px;top:106.5px" width="20" height="20" viewBox="0 0 16 16"><rect x=".6" y=".6" width="13.6" height="13.8" fill="#000" stroke="#8a8a8a" stroke-width=".9"/><rect x=".6" y=".4" width="13.6" height="1.8" fill="#2828c8"/><rect x=".6" y=".4" width="2" height="1.8" fill="#f4f4f4"/><g stroke="#f0f0f0" stroke-width="1"><path d="M2 3.4L5.6 7M12.8 3.4L9.4 6.6M2 8.8H4.4M2.4 13.4L5.4 10.4M12.8 13.4L10.4 11M7.4 2.8V5.4M7.4 11.4V14"/></g><path d="M4 11.4Q7 7 12.6 6.8" fill="none" stroke="#e8e8e8" stroke-width="2"/></svg>
<svg class="r ic" style="left:12.5px;top:144px" width="22" height="20" viewBox="0 0 22 20"><g transform="translate(0.4 5.2) scale(1.0)"><path d="M0 3.7H5.4M0 6.3H5.4M15 3.7H20.6M15 6.3H20.6" stroke="#000" stroke-width="1.25"/><rect x="5" y=".6" width="10" height="8.8" rx="2.6" fill="#006000" stroke="#000" stroke-width="1.1"/><rect x="6.4" y="2" width="2.6" height="6" rx="1" fill="#18e018"/><rect x="11" y="2" width="2.6" height="6" rx="1" fill="#18e018"/><path d="M10 .8V9.2" stroke="#000" stroke-width="1.2"/></g></svg>
<svg class="r" style="left:43.2px;top:152.6px" width="8.8" height="4.8" viewBox="0 0 8.8 4.8"><path d="M0 0H8.8L4.4 4.8Z" fill="#000"/></svg>
<svg class="r ic" style="left:60px;top:144px" width="20" height="20" viewBox="0 0 20 20"><path d="M.8 14.8H3.4V6.6H7V14.8H10.6V6.6H14.2V14.8H17.6V6.6H19.2" fill="none" stroke="#000" stroke-width="1.5"/></svg>
<svg class="r" style="left:90.5px;top:152.6px" width="8.8" height="4.8" viewBox="0 0 8.8 4.8"><path d="M0 0H8.8L4.4 4.8Z" fill="#000"/></svg>
<div class="r" style="left:106.8px;top:143.5px;width:1.4px;height:22.0px;background:#acacac;"></div>
<div class="r" style="left:108.2px;top:143.5px;width:1.2px;height:22.0px;background:#fbfbfb;"></div>
<div class="r" style="left:114.2px;top:143.5px;width:1.4px;height:22.0px;background:#acacac;"></div>
<div class="r" style="left:115.60000000000001px;top:143.5px;width:1.2px;height:22.0px;background:#fbfbfb;"></div>
<div class="r" style="left:119.2px;top:141px;width:28.3px;height:26.5px;background:#f9f9f9;box-sizing:border-box;border-top:1.3px solid #a6a6a6;border-left:1.3px solid #a6a6a6;border-right:1.3px solid #fff;border-bottom:1.3px solid #fff;"></div>
<svg class="r ic" style="left:124px;top:145px" width="22" height="20" viewBox="0 0 22 20"><path d="M9 9.4L19 19" stroke="#000" stroke-width="2.6" stroke-linecap="square"/><path d="M8.4 8.8L11 11.4" stroke="#b09020" stroke-width="2.4"/><g fill="#a02450"><rect x="1.4" y="2.8" width="2" height="2"/><rect x="10" y="1.6" width="2" height="2"/><rect x="5.2" y="5.6" width="2.2" height="2.2"/><rect x="13.8" y="6.6" width="2" height="2"/><rect x="2.4" y="9" width="2" height="2"/></g><g fill="#e0a0b8" opacity=".45"><rect x="2" y="1.8" width=".8" height="4"/><rect x=".4" y="3.4" width="4" height=".8"/><rect x="10.6" y=".6" width=".8" height="4"/><rect x="9" y="2.2" width="4" height=".8"/><rect x="14.4" y="5.6" width=".8" height="4"/><rect x="12.8" y="7.2" width="4" height=".8"/><rect x="3" y="8" width=".8" height="4"/><rect x="1.4" y="9.6" width="4" height=".8"/></g></svg>
<div class="r" style="left:150.60000000000002px;top:143.5px;width:1.4px;height:22.0px;background:#acacac;"></div>
<div class="r" style="left:152.0px;top:143.5px;width:1.2px;height:22.0px;background:#fbfbfb;"></div>
<div class="r" style="left:158.10000000000002px;top:143.5px;width:1.4px;height:22.0px;background:#acacac;"></div>
<div class="r" style="left:159.5px;top:143.5px;width:1.2px;height:22.0px;background:#fbfbfb;"></div>
<svg class="r ic" style="left:166.5px;top:144px" width="20" height="20" viewBox="0 0 20 20"><g stroke="#000" stroke-width="1.1" fill="none"><path d="M2.4 1L7 5.6M17.6 1L13 5.6M1.6 8.6L6 10.6M18.4 8.6L14 10.6M1.6 13L6 13.4M18.4 13L14 13.4M2 19.4L6.6 15.4M18 19.4L13.4 15.4"/></g><path d="M7.6 3.6Q10 2 12.4 3.6L13 6H7Z" fill="#600000" stroke="#000" stroke-width="1"/><rect x="6" y="6" width="8" height="10.6" rx="2.6" fill="#8a0808" stroke="#000" stroke-width="1.2"/><path d="M6 9.6H14M6 13H14" stroke="#300000" stroke-width="1"/><path d="M8 4.6H9.4M10.6 4.6H12" stroke="#d02020" stroke-width=".9"/></svg>
<div class="r" style="left:194.10000000000002px;top:143.5px;width:1.4px;height:22.0px;background:#acacac;"></div>
<div class="r" style="left:195.5px;top:143.5px;width:1.2px;height:22.0px;background:#fbfbfb;"></div>
<svg class="r ic" style="left:203px;top:144px" width="21" height="20" viewBox="0 0 21 20"><path d="M10.2 1.2V8" stroke="#000" stroke-width="1.7"/><path d="M4.8 5.4H15.6L10.2 10.2Z" fill="#000"/><path d="M1 19.6V15.4H4.6V13.2H15.8V15.4H19.6V19.6" fill="none" stroke="#000" stroke-width="1.6"/></svg>
<svg class="r ic" style="left:232px;top:144px" width="21" height="20" viewBox="0 0 21 20"><path d="M3.8 2.4V18M10 2.4V18M16.4 2.4V18" stroke="#000" stroke-width="2.3"/><ellipse cx="3.8" cy="7" rx="3.2" ry="2.1" fill="#10d010" stroke="#005000" stroke-width=".9"/><ellipse cx="10" cy="14.6" rx="3.2" ry="2.1" fill="#e8e800" stroke="#505000" stroke-width=".9"/><path d="M7.8 16.6L10 18.8L12.2 16.6Z" fill="#000"/><ellipse cx="16.4" cy="8.4" rx="3.2" ry="2.1" fill="#e80000" stroke="#600000" stroke-width=".9"/></svg>
<svg class="r ic" style="left:11.5px;top:181.5px" width="22" height="21" viewBox="0 0 22 21"><path d="M3.7 3Q3.7 1 5.7 1T7.7 3V13Q9.4 14 9.2 16.2Q8.6 18.6 5.7 19.8Q2.8 18.6 2.2 16.2Q2 14 3.7 13Z" fill="#d80000" stroke="#500000" stroke-width="1.1" stroke-linejoin="round"/><path d="M4.3 12.6H7.1V13.4Q8.8 14.4 8.6 16.1Q8 18.2 5.7 19.1Q3.4 18.2 2.8 16.1Q2.6 14.4 4.3 13.4Z" fill="#d80000"/><path d="M5.2 2.6V12" stroke="#fff" stroke-opacity=".55" stroke-width=".9"/><text x="11.6" y="14.2" font-family="Liberation Sans, sans-serif" font-size="10.8" fill="#000">H</text></svg>
<svg class="r ic" style="left:40.5px;top:181.5px" width="22" height="21" viewBox="0 0 22 21"><path d="M3.7 3Q3.7 1 5.7 1T7.7 3V13Q9.4 14 9.2 16.2Q8.6 18.6 5.7 19.8Q2.8 18.6 2.2 16.2Q2 14 3.7 13Z" fill="#c4c4c4" stroke="#505000" stroke-width="1.1" stroke-linejoin="round"/><path d="M4.3 8H7.1V13.4Q8.8 14.4 8.6 16.1Q8 18.2 5.7 19.1Q3.4 18.2 2.8 16.1Q2.6 14.4 4.3 13.4Z" fill="#e8e800"/><path d="M5.2 2.6V12" stroke="#fff" stroke-opacity=".55" stroke-width=".9"/><text x="9.8" y="14.2" font-family="Liberation Sans, sans-serif" font-size="10.8" fill="#000">W</text></svg>
<svg class="r ic" style="left:69.5px;top:181.5px" width="22" height="21" viewBox="0 0 22 21"><path d="M3.7 3Q3.7 1 5.7 1T7.7 3V13Q9.4 14 9.2 16.2Q8.6 18.6 5.7 19.8Q2.8 18.6 2.2 16.2Q2 14 3.7 13Z" fill="#c4c4c4" stroke="#303040" stroke-width="1.1" stroke-linejoin="round"/><path d="M4.3 12.6H7.1V13.4Q8.8 14.4 8.6 16.1Q8 18.2 5.7 19.1Q3.4 18.2 2.8 16.1Q2.6 14.4 4.3 13.4Z" fill="#0000d8"/><path d="M5.2 2.6V12" stroke="#fff" stroke-opacity=".55" stroke-width=".9"/><text x="11" y="14.2" font-family="Liberation Sans, sans-serif" font-size="10.8" fill="#000">C</text></svg>
<svg class="r ic" style="left:98.5px;top:181.5px" width="22" height="20" viewBox="0 0 22 20"><rect x="11.6" y=".6" width="9.6" height="10.4" fill="#fbfbfb"/><path d="M11.4 0V12" stroke="#b8b8b8" stroke-width="1"/><text x=".4" y="9.2" font-family="Liberation Sans, sans-serif" font-weight="bold" font-size="9.2" fill="#000" stroke="#000" stroke-width=".5" textLength="9" lengthAdjust="spacingAndGlyphs">M</text><path d="M13.4 5.6H21M17.2 1.8V9.4" stroke="#f00000" stroke-width="2.3"/><path d="M.6 13.6H3.6M.6 16.2H3.6M17.6 13.6H20.8M17.6 16.2H20.8" stroke="#000" stroke-width="1.3"/><path d="M7.6 14.9H12" stroke="#000" stroke-width="1.1"/><rect x="3.8" y="11.2" width="4.4" height="7.6" rx="1.6" fill="#fff" stroke="#000" stroke-width="1.5"/><rect x="13" y="11.2" width="4.4" height="7.6" rx="1.6" fill="#fff" stroke="#000" stroke-width="1.5"/></svg>
<svg class="r ic" style="left:127.5px;top:181.5px" width="22" height="20" viewBox="0 0 22 20"><rect x="11.6" y=".6" width="9.6" height="10.4" fill="#fbfbfb"/><path d="M11.4 0V12" stroke="#b8b8b8" stroke-width="1"/><text x=".4" y="9.2" font-family="Liberation Sans, sans-serif" font-weight="bold" font-size="9.2" fill="#000" stroke="#000" stroke-width=".5" textLength="9" lengthAdjust="spacingAndGlyphs">M</text><path d="M13.4 5.6H21M17.2 1.8V9.4" stroke="#f00000" stroke-width="2.3"/><g transform="translate(0.2 10.6) scale(1.0)"><path d="M0 3.7H5.4M0 6.3H5.4M15 3.7H20.6M15 6.3H20.6" stroke="#000" stroke-width="1.25"/><rect x="5" y=".6" width="10" height="8.8" rx="2.6" fill="#006000" stroke="#000" stroke-width="1.1"/><rect x="6.4" y="2" width="2.6" height="6" rx="1" fill="#18e018"/><rect x="11" y="2" width="2.6" height="6" rx="1" fill="#18e018"/><path d="M10 .8V9.2" stroke="#000" stroke-width="1.2"/></g></svg>
<div class="r" style="left:155.9px;top:181px;width:1.4px;height:22px;background:#acacac;"></div>
<div class="r" style="left:157.29999999999998px;top:181px;width:1.2px;height:22px;background:#fbfbfb;"></div>
<svg class="r ic" style="left:163.5px;top:181.5px" width="22" height="20" viewBox="0 0 22 20"><rect x="10.15" y="1.6000000000000005" width="2.5" height="3.4" fill="#000" transform="rotate(0 11.4 9.4)"/><rect x="10.15" y="1.6000000000000005" width="2.5" height="3.4" fill="#000" transform="rotate(45 11.4 9.4)"/><rect x="10.15" y="1.6000000000000005" width="2.5" height="3.4" fill="#000" transform="rotate(90 11.4 9.4)"/><rect x="10.15" y="1.6000000000000005" width="2.5" height="3.4" fill="#000" transform="rotate(135 11.4 9.4)"/><rect x="10.15" y="1.6000000000000005" width="2.5" height="3.4" fill="#000" transform="rotate(180 11.4 9.4)"/><rect x="10.15" y="1.6000000000000005" width="2.5" height="3.4" fill="#000" transform="rotate(225 11.4 9.4)"/><rect x="10.15" y="1.6000000000000005" width="2.5" height="3.4" fill="#000" transform="rotate(270 11.4 9.4)"/><rect x="10.15" y="1.6000000000000005" width="2.5" height="3.4" fill="#000" transform="rotate(315 11.4 9.4)"/><circle cx="11.4" cy="9.4" r="5.4" fill="#000"/><circle cx="11.4" cy="9.4" r="4.3" fill="#c4c4c4"/><circle cx="11.4" cy="9.4" r="2.4" fill="#f4f4f4" stroke="#505050" stroke-width=".6"/><rect x="1.2" y="9.6" width="11.4" height="9.4" fill="#808000" stroke="#000" stroke-width="1.1"/><rect x="3.6" y="10.2" width="6.4" height="3.4" fill="#e8e8e8"/><rect x="3.8" y="15.4" width="6" height="3.4" fill="#000"/><rect x="7.6" y="16" width="1.4" height="2.4" fill="#fff"/></svg>
<svg class="r ic" style="left:192.5px;top:181.5px" width="22" height="20" viewBox="0 0 22 20"><rect x="9.35" y="1.6000000000000005" width="2.5" height="3.4" fill="#000" transform="rotate(0 10.6 9.4)"/><rect x="9.35" y="1.6000000000000005" width="2.5" height="3.4" fill="#000" transform="rotate(45 10.6 9.4)"/><rect x="9.35" y="1.6000000000000005" width="2.5" height="3.4" fill="#000" transform="rotate(90 10.6 9.4)"/><rect x="9.35" y="1.6000000000000005" width="2.5" height="3.4" fill="#000" transform="rotate(135 10.6 9.4)"/><rect x="9.35" y="1.6000000000000005" width="2.5" height="3.4" fill="#000" transform="rotate(180 10.6 9.4)"/><rect x="9.35" y="1.6000000000000005" width="2.5" height="3.4" fill="#000" transform="rotate(225 10.6 9.4)"/><rect x="9.35" y="1.6000000000000005" width="2.5" height="3.4" fill="#000" transform="rotate(270 10.6 9.4)"/><rect x="9.35" y="1.6000000000000005" width="2.5" height="3.4" fill="#000" transform="rotate(315 10.6 9.4)"/><circle cx="10.6" cy="9.4" r="5.4" fill="#000"/><circle cx="10.6" cy="9.4" r="4.3" fill="#c4c4c4"/><circle cx="10.6" cy="9.4" r="2.4" fill="#f4f4f4" stroke="#505050" stroke-width=".6"/><path d="M1.2 18.6V10.8H4.2L5.4 12.2H11V18.6Z" fill="#ffff80" stroke="#000" stroke-width="1.1"/></svg>
<svg class="r ic" style="left:221.5px;top:181.5px" width="22" height="20" viewBox="0 0 22 20"><rect x="9.75" y="2.000000000000001" width="2.5" height="3.4" fill="#000" transform="rotate(0 11 9.8)"/><rect x="9.75" y="2.000000000000001" width="2.5" height="3.4" fill="#000" transform="rotate(45 11 9.8)"/><rect x="9.75" y="2.000000000000001" width="2.5" height="3.4" fill="#000" transform="rotate(90 11 9.8)"/><rect x="9.75" y="2.000000000000001" width="2.5" height="3.4" fill="#000" transform="rotate(135 11 9.8)"/><rect x="9.75" y="2.000000000000001" width="2.5" height="3.4" fill="#000" transform="rotate(180 11 9.8)"/><rect x="9.75" y="2.000000000000001" width="2.5" height="3.4" fill="#000" transform="rotate(225 11 9.8)"/><rect x="9.75" y="2.000000000000001" width="2.5" height="3.4" fill="#000" transform="rotate(270 11 9.8)"/><rect x="9.75" y="2.000000000000001" width="2.5" height="3.4" fill="#000" transform="rotate(315 11 9.8)"/><circle cx="11" cy="9.8" r="5.4" fill="#000"/><circle cx="11" cy="9.8" r="4.3" fill="#c4c4c4"/><circle cx="11" cy="9.8" r="2.4" fill="#f4f4f4" stroke="#505050" stroke-width=".6"/><path d="M.4 10L6 5.2V7.8H9.8Q12 10.4 11 15L8.6 12H6V14.6Z" fill="#f00000"/></svg>
<svg class="r ic" style="left:0px;top:211px" width="683" height="36" viewBox="0 0 683 36"><g transform="translate(1 1)" fill="#fff"><path d="M16.8 17.8L24 10.6L31.2 17.8Z"/><rect x="16.8" y="20.2" width="14.4" height="3.6"/></g><g fill="#a0a0a0"><path d="M16.8 17.8L24 10.6L31.2 17.8Z"/><rect x="16.8" y="20.2" width="14.4" height="3.6"/></g><rect x="40.6" y="7.4" width="1.5" height="22.4" fill="#a6a6a6"/><rect x="42.1" y="7.4" width="1.1" height="22.4" fill="#fff"/><circle cx="60" cy="18.1" r="6.6" fill="#ff0000"/><rect x="76.9" y="7.4" width="1.5" height="22.4" fill="#a6a6a6"/><rect x="78.4" y="7.4" width="1.1" height="22.4" fill="#fff"/><rect x="84" y="7.2" width="25" height="23.4" fill="#f8f8f8"/><g transform="translate(0.8 0.8)" fill="#fff"><rect x="92" y="12.2" width="4" height="14"/><rect x="98.4" y="12.2" width="3.8" height="14"/></g><g fill="#a0a0a0"><rect x="92" y="12.2" width="4" height="14"/><rect x="98.4" y="12.2" width="3.8" height="14"/></g><path d="M118 11.4L131.4 18.2L118 25Z" fill="#10f010"/><path d="M144 15.9H153.6L148.8 21.6Z" fill="#000"/><path d="M164 11.4L172 18.2L164 25ZM171.4 11.4L179.4 18.2L171.4 25Z" fill="#10f010"/><g transform="translate(1 1)" fill="#fff"><path d="M201.6 11.4V25L193 18.2Z"/><rect x="203" y="11.4" width="4.2" height="13.6"/></g><g fill="#a0a0a0"><path d="M201.6 11.4V25L193 18.2Z"/><rect x="203" y="11.4" width="4.2" height="13.6"/></g><g transform="translate(1 1)" fill="#fff"><rect x="223.2" y="11.4" width="4.2" height="13.6"/><path d="M229 11.4L237.4 18.2L229 25Z"/></g><g fill="#a0a0a0"><rect x="223.2" y="11.4" width="4.2" height="13.6"/><path d="M229 11.4L237.4 18.2L229 25Z"/></g><g transform="translate(1 1)" fill="#fff"><rect x="250.4" y="11.4" width="3.8" height="13.6"/><path d="M262.4 11.4V25L254.2 18.2Z"/><rect x="261" y="16.4" width="6.4" height="3.6"/></g><g fill="#a0a0a0"><rect x="250.4" y="11.4" width="3.8" height="13.6"/><path d="M262.4 11.4V25L254.2 18.2Z"/><rect x="261" y="16.4" width="6.4" height="3.6"/></g><rect x="292" y="15.6" width="345.5" height="2" fill="#8a8a8a"/><rect x="292" y="17.6" width="345.5" height="1.3" fill="#fff"/><rect x="283" y="9.2" width="9" height="17.4" fill="#f0f0f0"/><path d="M283.6 26V9.8H291.4" fill="none" stroke="#fff" stroke-width="1.4"/><path d="M283 26.2H291.6V9.4" fill="none" stroke="#a0a0a0" stroke-width="1.4"/><g transform="translate(1 1)" fill="#fff"><rect x="665.4" y="11.8" width="3.8" height="13"/><path d="M657 11.8L665.6 18.2L657 24.8Z"/><rect x="653" y="16.4" width="6" height="3.6"/></g><g fill="#a0a0a0"><rect x="665.4" y="11.8" width="3.8" height="13"/><path d="M657 11.8L665.6 18.2L657 24.8Z"/><rect x="653" y="16.4" width="6" height="3.6"/></g></svg>
<div class="r" style="left:0px;top:247.1px;width:1000px;height:1.7px;background:#b8b8b8;"></div>
<div class="r" style="left:0px;top:246.3px;width:681px;height:1.1px;background:#fafafa;"></div>
<div class="r" style="left:0px;top:247.4px;width:582px;height:2.5px;background:#747474;"></div>
<div class="r" style="left:0px;top:249.7px;width:559px;height:520.3px;background:#ababab;"></div>
<div class="r" style="left:559px;top:249px;width:23px;height:521px;background:#f0f0f0;"></div>
<div class="r" style="left:569.3px;top:271px;width:2.7px;height:313.5px;background:#8e8e8e;"></div>
<div class="r" style="left:559px;top:249.8px;width:1.4px;height:520px;background:#fbfbfb;"></div>
<div class="r" style="left:581.7px;top:249px;width:1.5px;height:521px;background:#ffffff;"></div>
<div class="r" style="left:582.5px;top:248.8px;width:417.5px;height:521px;background:#f0f0f0;"></div>
<div class="r" style="left:583.2px;top:248.8px;width:416.8px;height:1.4px;background:#ffffff;"></div>
<div class="r" style="left:588px;top:255.1px;width:394.5px;height:1.9px;background:#ffffff;"></div>
<div class="r" style="left:588px;top:257.0px;width:394.8px;height:1.8px;background:#b8b8b8;"></div>
<div class="r" style="left:981.2px;top:255.5px;width:1.6px;height:3.3px;background:#b8b8b8;"></div>
<div class="r" style="left:588px;top:259.1px;width:394.5px;height:1.9px;background:#ffffff;"></div>
<div class="r" style="left:588px;top:261.0px;width:394.8px;height:1.8px;background:#b8b8b8;"></div>
<div class="r" style="left:981.2px;top:259.5px;width:1.6px;height:3.3px;background:#b8b8b8;"></div>
<svg class="r" style="left:988px;top:255px" width="10" height="9" viewBox="0 0 10 9"><path d="M1.7 1.6L8.1 7.2M8.1 1.6L1.7 7.2" stroke="#000" stroke-width="2" fill="none"/></svg>
<div class="r" style="left:590px;top:272px;width:410px;height:493.3px;background:#ffffff;"></div>
<div class="r" style="left:587.2px;top:268.8px;width:410.8px;height:494.5px;background:#8c8c8c;"></div>
<div class="r" style="left:589px;top:270.3px;width:408.7px;height:492.8px;background:#000000;"></div>
<div class="r" style="left:671.8px;top:277.3px;width:320.2px;height:14.9px;background:#404040;"></div>
<span class="t" style="left:595.31px;top:279.05px;font-size:14px;line-height:14px;color:#c8c8c8;transform:scaleX(0.9702);">Longitude</span>
<div class="r" style="left:671.8px;top:293.55px;width:320.2px;height:14.9px;background:#404040;"></div>
<span class="t" style="left:595.27px;top:295.30px;font-size:14px;line-height:14px;color:#c8c8c8;transform:scaleX(1.0071);">Latitude</span>
<div class="r" style="left:671.8px;top:309.8px;width:320.2px;height:14.9px;background:#404040;"></div>
<span class="t" style="left:595.60px;top:311.55px;font-size:14px;line-height:14px;color:#c8c8c8;transform:scaleX(0.9538);">Altitude</span>
<div class="r" style="left:671.8px;top:326.05px;width:320.2px;height:14.9px;background:#404040;"></div>
<span class="t" style="left:595.60px;top:327.80px;font-size:14px;line-height:14px;color:#c8c8c8;transform:scaleX(0.9161);">Altitude (msl)</span>
<div class="r" style="left:671.8px;top:342.3px;width:320.2px;height:14.9px;background:#404040;"></div>
<span class="t" style="left:596.33px;top:344.05px;font-size:14px;line-height:14px;color:#c8c8c8;transform:scaleX(0.9584);">TTFF</span>
<div class="r" style="left:671.8px;top:358.55px;width:320.2px;height:14.9px;background:#404040;"></div>
<span class="t" style="left:596.12px;top:360.30px;font-size:14px;line-height:14px;color:#c8c8c8;transform:scaleX(0.9667);">Fix Mode</span>
<div class="r" style="left:671.8px;top:374.8px;width:320.2px;height:14.9px;background:#404040;"></div>
<span class="t" style="left:596.22px;top:376.55px;font-size:14px;line-height:14px;color:#c8c8c8;transform:scaleX(0.9866);">3D Acc. [m]</span>
<div class="r" style="left:671.8px;top:391.05px;width:320.2px;height:14.9px;background:#404040;"></div>
<span class="t" style="left:596.01px;top:392.80px;font-size:14px;line-height:14px;color:#c8c8c8;transform:scaleX(0.9896);">2D Acc. [m]</span>
<div class="r" style="left:671.8px;top:407.3px;width:320.2px;height:14.9px;background:#404040;"></div>
<span class="t" style="left:595.73px;top:409.05px;font-size:14px;line-height:14px;color:#c8c8c8;transform:scaleX(0.9524);">PDOP</span>
<div class="r" style="left:671.8px;top:423.55px;width:320.2px;height:14.9px;background:#404040;"></div>
<span class="t" style="left:595.70px;top:425.30px;font-size:14px;line-height:14px;color:#c8c8c8;transform:scaleX(0.9852);">HDOP</span>
<span class="t" style="left:595.81px;top:441.55px;font-size:14px;line-height:14px;color:#c8c8c8;transform:scaleX(0.9332);">Satellites</span>
<span class="t" style="left:911.28px;top:279.05px;font-size:14px;line-height:14px;color:#c8c8c8;transform:scaleX(0.9749);">1.53024253 °</span>
<span class="t" style="left:905.03px;top:295.30px;font-size:14px;line-height:14px;color:#c8c8c8;transform:scaleX(0.9707);">42.50820118 °</span>
<span class="t" style="left:921.48px;top:311.55px;font-size:14px;line-height:14px;color:#c8c8c8;transform:scaleX(0.9721);">1105.561 m</span>
<span class="t" style="left:921.49px;top:327.80px;font-size:14px;line-height:14px;color:#c8c8c8;transform:scaleX(0.9579);">1056.524 m</span>
<span class="t" style="left:906.73px;top:360.30px;font-size:14px;line-height:14px;color:#22c322;transform:scaleX(0.9748);">TIME/DGNSS</span>
<span class="t" style="left:672.46px;top:376.55px;font-size:14px;line-height:14px;color:#c8c8c8;transform:scaleX(0.9673);">0</span>
<span class="t" style="left:867.52px;top:376.55px;font-size:14px;line-height:14px;color:#c8c8c8;transform:scaleX(0.9714);">30.0</span>
<span class="t" style="left:976.96px;top:376.55px;font-size:14px;line-height:14px;color:#c8c8c8;transform:scaleX(0.9662);">50</span>
<span class="t" style="left:672.46px;top:392.80px;font-size:14px;line-height:14px;color:#c8c8c8;transform:scaleX(0.9673);">0</span>
<span class="t" style="left:831.71px;top:392.80px;font-size:14px;line-height:14px;color:#c8c8c8;transform:scaleX(0.9819);">24.5</span>
<span class="t" style="left:976.96px;top:392.80px;font-size:14px;line-height:14px;color:#c8c8c8;transform:scaleX(0.9662);">50</span>
<div class="r" style="left:862px;top:376.3px;width:3.8px;height:12.5px;background:#00c000;"></div>
<div class="r" style="left:826.6px;top:392.5px;width:3.8px;height:12.5px;background:#00c000;"></div>
<div class="r" style="left:895.4px;top:357.3px;width:102.8px;height:19.6px;background:transparent;box-sizing:border-box;border:2.3px solid #e32227;"></div>
<div class="r" style="left:671.8px;top:441.3px;width:17.4px;height:13.2px;background:#00c000;"></div>
<div class="r" style="left:690.55px;top:441.3px;width:17.4px;height:13.2px;background:#0000c8;"></div>
<div class="r" style="left:709.3px;top:441.3px;width:17.4px;height:13.2px;background:#0000c8;"></div>
<div class="r" style="left:728.05px;top:441.3px;width:17.4px;height:13.2px;background:#00c000;"></div>
<div class="r" style="left:749.3px;top:441.3px;width:17.4px;height:13.2px;background:#00c000;"></div>
<div class="r" style="left:768.05px;top:441.3px;width:17.4px;height:13.2px;background:#0000c8;"></div>
<div class="r" style="left:786.8px;top:441.3px;width:17.4px;height:13.2px;background:#0000c8;"></div>
<div class="r" style="left:805.55px;top:441.3px;width:17.4px;height:13.2px;background:#00c000;"></div>
<div class="r" style="left:826.8px;top:441.3px;width:17.4px;height:13.2px;background:#00c000;"></div>
<div class="r" style="left:845.55px;top:441.3px;width:17.4px;height:13.2px;background:#00c000;"></div>
<div class="r" style="left:864.3px;top:441.3px;width:17.4px;height:13.2px;background:#0000c8;"></div>
<div class="r" style="left:883.05px;top:441.3px;width:17.4px;height:13.2px;background:#00c000;"></div>
<div class="r" style="left:904.3px;top:441.3px;width:17.4px;height:13.2px;background:#00c000;"></div>
<div class="r" style="left:923.05px;top:441.3px;width:17.4px;height:13.2px;background:#0000c8;"></div>
<div class="r" style="left:941.8px;top:441.3px;width:17.4px;height:13.2px;background:#0000c8;"></div>
<div class="r" style="left:960.55px;top:441.3px;width:17.4px;height:13.2px;background:#00c000;"></div>
<div class="r" style="left:981.8px;top:441.3px;width:15.9px;height:13.2px;background:#0000c8;"></div>
<div class="r" style="left:0px;top:769.6px;width:1000px;height:25.4px;background:#f0f0f0;"></div>
<div class="r" style="left:0px;top:769.8px;width:582px;height:1.7px;background:#ffffff;"></div>
<div class="r" style="left:582.6px;top:769.8px;width:417.4px;height:1.3px;background:#a8a8a8;"></div>
<div class="r" style="left:152px;top:774.5px;width:281px;height:21px;background:transparent;box-sizing:border-box;border-top:1.2px solid #b9b9b9;border-left:1.2px solid #b9b9b9;border-right:1.2px solid #fdfdfd;"></div>
<div class="r" style="left:447.5px;top:774.5px;width:281.0px;height:21px;background:transparent;box-sizing:border-box;border-top:1.2px solid #b9b9b9;border-left:1.2px solid #b9b9b9;border-right:1.2px solid #fdfdfd;"></div>
<div class="r" style="left:752px;top:774.5px;width:143px;height:21px;background:transparent;box-sizing:border-box;border-top:1.2px solid #b9b9b9;border-left:1.2px solid #b9b9b9;border-right:1.2px solid #fdfdfd;"></div>
<div class="r" style="left:899.5px;top:774.5px;width:101.5px;height:21px;background:transparent;box-sizing:border-box;border-top:1.2px solid #b9b9b9;border-left:1.2px solid #b9b9b9;border-right:1.2px solid #fdfdfd;"></div>
<span class="t" style="left:-0.24px;top:777.66px;font-size:16px;line-height:16px;color:#1c1c1c;transform:scaleX(0.8118);">Ready</span>
<svg class="r ic" style="left:154.2px;top:780.4px" width="21" height="10" viewBox="0 0 21 10"><path d="M0 3.3H3.4M0 6.3H3.4M17.4 3.4H20.6M17.4 6.4H20.6" stroke="#000" stroke-width="1.3"/><path d="M3.6 1.1H9.2V2.8H7.8V6.9H9.2V8.7H3.6Q2.4 4.9 3.6 1.1Z" fill="#b4b4b4" stroke="#000" stroke-width="1.5" stroke-linejoin="round"/><rect x="12.2" y=".9" width="5.2" height="8" rx="2.3" fill="#b4b4b4" stroke="#000" stroke-width="1.7"/></svg>
<span class="t" style="left:178.80px;top:777.66px;font-size:16px;line-height:16px;color:#1c1c1c;transform:scaleX(0.9355);">NTRIP client: Not connected</span>
<svg class="r ic" style="left:449.7px;top:780.4px" width="21" height="10" viewBox="0 0 21 10"><path d="M0 3.3H3.4M0 6.3H3.4M17.4 3.4H20.6M17.4 6.4H20.6" stroke="#000" stroke-width="1.3"/><path d="M3.6 1.1H9.2V2.8H7.8V6.9H9.2V8.7H3.6Q2.4 4.9 3.6 1.1Z" fill="#b4b4b4" stroke="#000" stroke-width="1.5" stroke-linejoin="round"/><rect x="12.2" y=".9" width="5.2" height="8" rx="2.3" fill="#b4b4b4" stroke="#000" stroke-width="1.7"/></svg>
<span class="t" style="left:473.27px;top:777.66px;font-size:16px;line-height:16px;color:#1c1c1c;transform:scaleX(0.9586);">MQTT client: Not connected</span>
<span class="t" style="left:754.03px;top:777.66px;font-size:16px;line-height:16px;color:#1c1c1c;transform:scaleX(0.9335);">u-blox Generation 9</span>
<svg class="r ic" style="left:902px;top:780.4px" width="20" height="10" viewBox="0 0 20 10"><g transform="translate(0 0.3) scale(0.95)"><path d="M0 3.7H5.4M0 6.3H5.4M15 3.7H20.6M15 6.3H20.6" stroke="#000" stroke-width="1.25"/><rect x="5" y=".6" width="10" height="8.8" rx="2.6" fill="#005800" stroke="#000" stroke-width="1.1"/><rect x="6.4" y="2" width="2.6" height="6" rx="1" fill="#168c16"/><rect x="11" y="2" width="2.6" height="6" rx="1" fill="#168c16"/><path d="M10 .8V9.2" stroke="#000" stroke-width="1.2"/></g></svg>
<span class="t" style="left:927.29px;top:777.66px;font-size:16px;line-height:16px;color:#1c1c1c;transform:scaleX(0.8879);">COM5 1</span>
<svg class="r" style="left:984px;top:779px" width="16" height="16" viewBox="0 0 16 16" stroke="#b0b0b0" stroke-width="1.3"><path d="M5 16L16 5M9 16L16 9M13 16L16 13"/></svg>
</body></html>
